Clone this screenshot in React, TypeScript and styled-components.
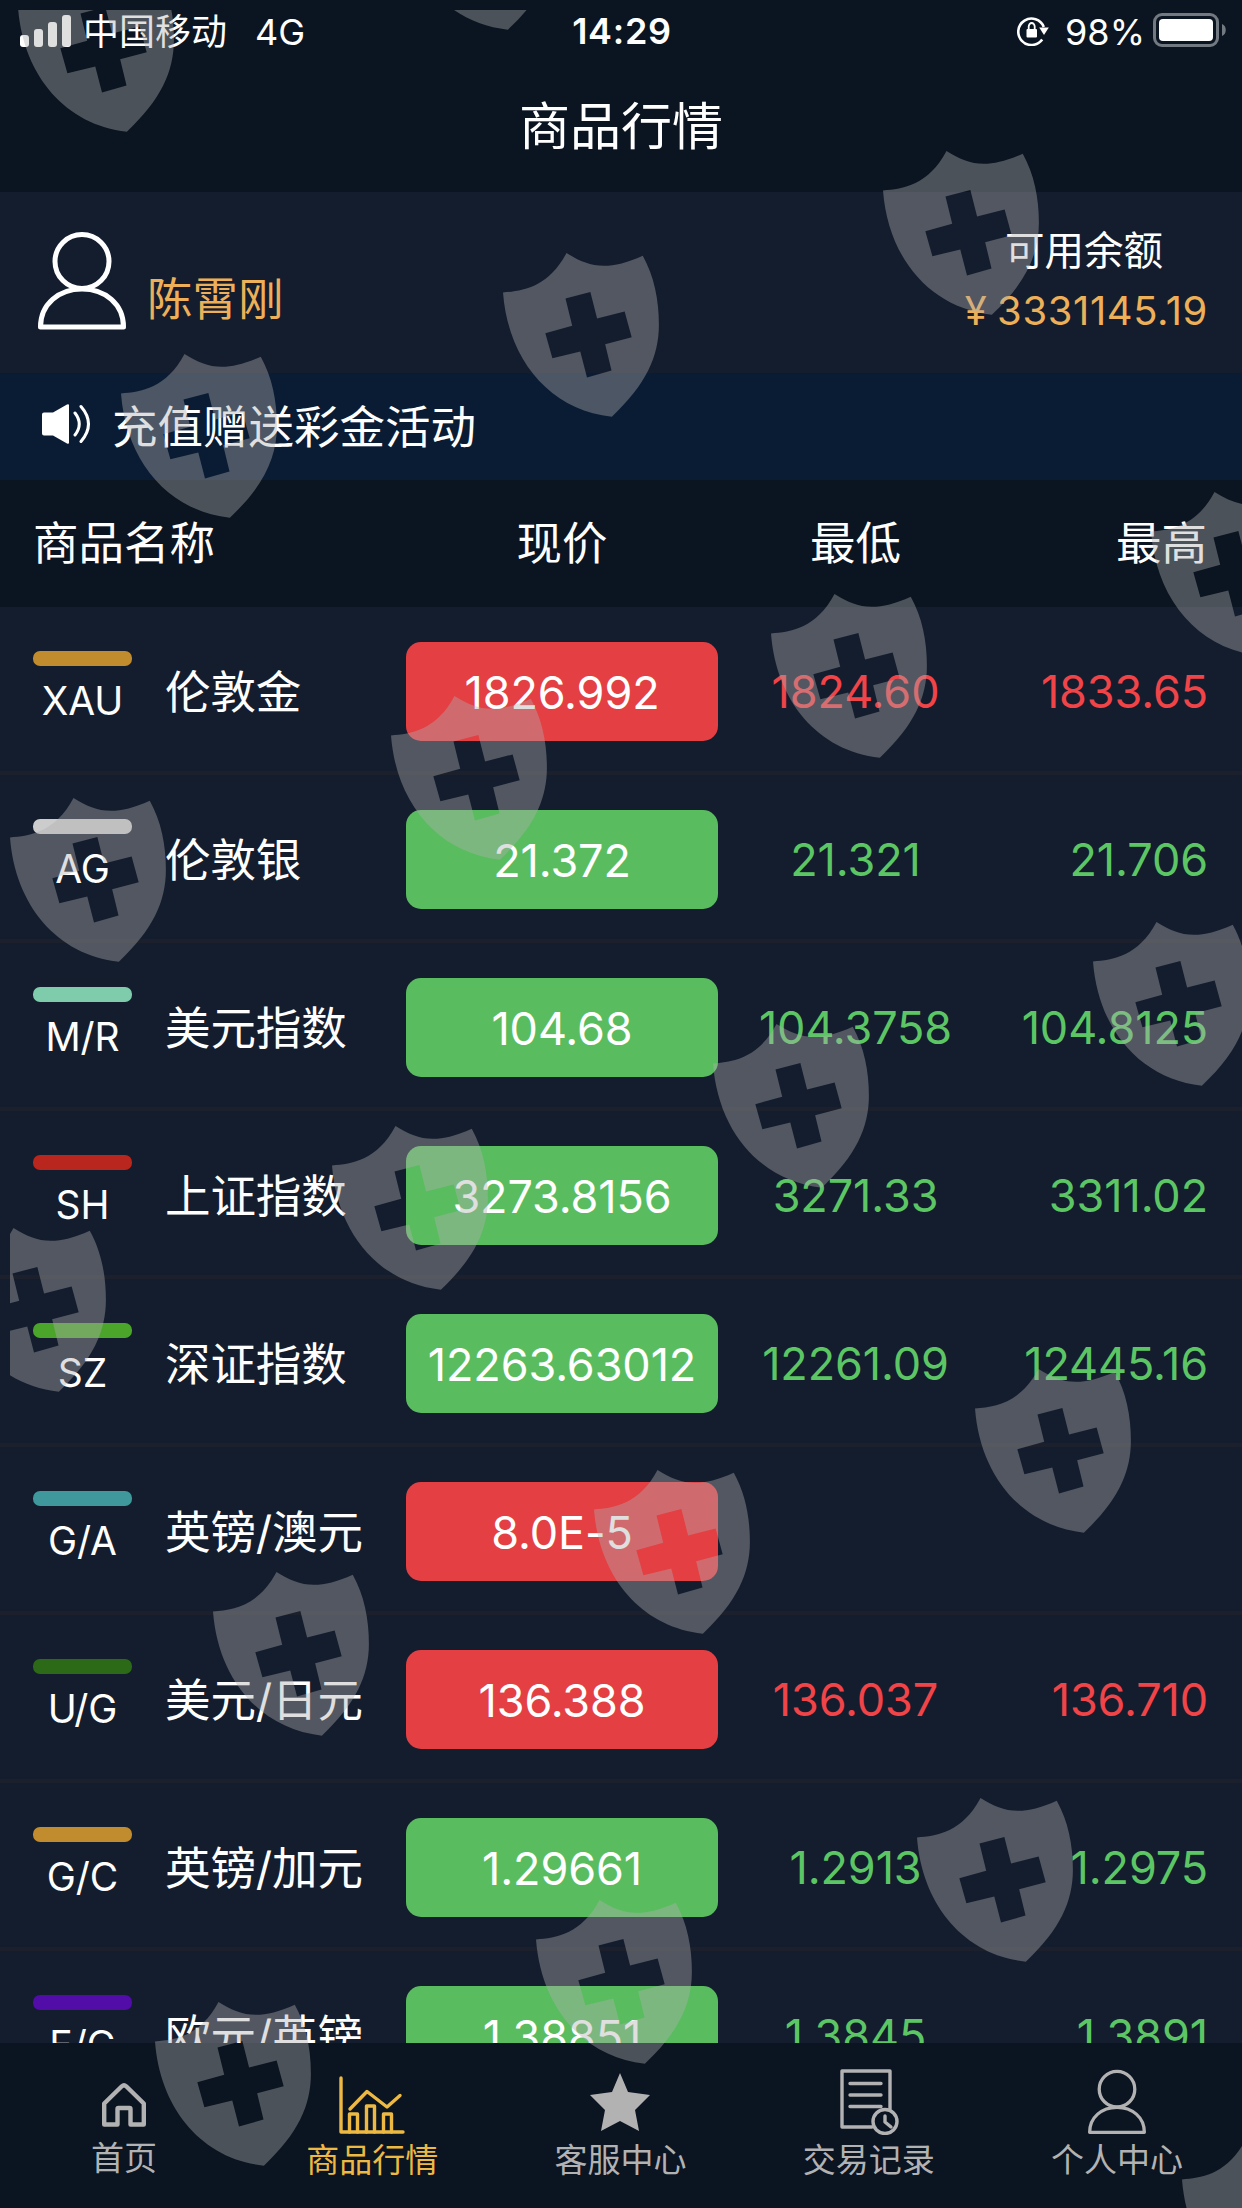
import styled, { createGlobalStyle } from 'styled-components'

const GlobalStyle = createGlobalStyle`
  * {
    box-sizing: border-box;
  }
  body {
    margin: 0;
    background-color: #0b1421;
    color: #fff;
    font-family: Inter, 'Noto Sans CJK SC', sans-serif;
    font-weight: 380;
  }
`

const gold = '#edb059'
const red = '#f04448'
const green = '#5cc665'

// Page
const Screen = styled.div`
  position: relative;
  display: flex;
  flex-direction: column;
  width: 1242px;
  height: 2208px;
  overflow: hidden;
`

// Status bar
const StatusBar = styled.div`
  display: grid;
  grid-template-columns: 1fr auto 1fr;
  align-items: center;
  height: 62px;
  padding: 0 15px 0 20px;
`
const StatusSide = styled.div<{ $end?: boolean }>`
  display: flex;
  align-items: center;
  justify-content: ${(p) => (p.$end ? 'flex-end' : 'flex-start')};
`
const Signal = styled.div`
  display: flex;
  align-items: flex-end;
  gap: 5px;
  height: 32px;
  margin-right: 12px;
`
const SignalBar = styled.span<{ $height: number }>`
  width: 9px;
  height: ${(p) => p.$height}px;
  border-radius: 3px;
  background-color: #fff;
`
const StatusText = styled.span<{ $left?: number }>`
  margin-left: ${(p) => p.$left ?? 0}px;
  padding-top: 1px;
  font-size: 36px;
  line-height: 1;
`
const Battery = styled.span`
  margin-left: 8px;
  padding-top: 1px;
`
const Clock = styled.span`
  margin-right: 3px;
  font-size: 36px;
  font-weight: 600;
  letter-spacing: 0.7px;
`

// Title
const TitleBar = styled.h1`
  display: flex;
  align-items: center;
  justify-content: center;
  height: 130px;
  margin: 0;
  padding-bottom: 9px;
  font-size: 51px;
  font-weight: inherit;
`

// User panel
const UserPanel = styled.div`
  display: flex;
  align-items: center;
  justify-content: space-between;
  height: 181px;
  padding: 0 34px 3px 38px;
  background-color: #141d2e;
`
const UserInfo = styled.div`
  display: flex;
  align-items: flex-end;
  gap: 21px;
`
const UserName = styled.span`
  color: ${gold};
  font-size: 45.5px;
  line-height: 61px;
`
const Balance = styled.div`
  display: flex;
  flex-direction: column;
  align-items: flex-end;
`
const BalanceLabel = styled.span`
  margin-right: 45px;
  font-size: 39.5px;
  line-height: 60px;
`
const BalanceValue = styled.span`
  color: ${gold};
  font-size: 40px;
  letter-spacing: 0.6px;
  word-spacing: -2px;
  line-height: 60px;
`

// Notice
const Notice = styled.div`
  display: flex;
  align-items: center;
  gap: 20px;
  height: 107px;
  padding: 0 0 6px 41px;
  background-color: #0a1c34;
  font-size: 45.5px;
`

// Table
const TableHead = styled.div`
  display: grid;
  grid-template-columns: 373px 312px 275px 1fr;
  align-items: center;
  flex-shrink: 0;
  height: 127px;
  padding: 0 35px 7px 33px;
  font-size: 45.5px;
`
const HeadCell = styled.span<{ $align?: string }>`
  text-align: ${(p) => p.$align ?? 'left'};
`
const List = styled.div`
  flex: 1;
  min-height: 0;
  overflow: hidden;
`
const Row = styled.div`
  display: grid;
  grid-template-columns: 373px 312px 275px 1fr;
  align-items: center;
  height: 168px;
  padding: 5px 34px 0 33px;
  background-color: #141d2e;
  border-bottom: 4px solid #1b202c;
  font-size: 45px;
  letter-spacing: -0.1px;
`
const Product = styled.div`
  display: flex;
  align-items: center;
  gap: 33px;
  padding-bottom: 7px;
  font-size: 45.5px;
  letter-spacing: -0.1px;
`
const Name = styled.span`
  padding-top: 2px;
`
const Code = styled.div`
  display: flex;
  flex-direction: column;
  align-items: center;
  gap: 11px;
  width: 99px;
  font-size: 39px;
  line-height: 48px;
`
const Stripe = styled.span<{ $color: string }>`
  width: 99px;
  height: 15px;
  border-radius: 7px;
  background-color: ${(p) => p.$color};
`
const Price = styled.div<{ $up: boolean }>`
  display: flex;
  align-items: center;
  justify-content: center;
  height: 99px;
  padding-top: 1px;
  border-radius: 15px;
  background-color: ${(p) => (p.$up ? '#e43f43' : '#59bd5f')};
`
const Figure = styled.span<{ $up: boolean; $align: string }>`
  color: ${(p) => (p.$up ? red : green)};
  text-align: ${(p) => p.$align};
`

// Tab bar
const TabBar = styled.nav`
  display: grid;
  grid-template-columns: repeat(5, 1fr);
  flex-shrink: 0;
  height: 165px;
  padding-right: 1px;
  background-color: #0b1421;
`
const Tab = styled.div<{ $active?: boolean; $lift?: number; $gap?: number }>`
  display: flex;
  flex-direction: column;
  align-items: center;
  justify-content: flex-end;
  padding-bottom: ${(p) => 24 + (p.$lift ?? 0)}px;
  color: ${(p) => (p.$active ? '#edb942' : '#b2b2b3')};
  font-size: 33px;
  line-height: 48px;
  svg {
    display: block;
    margin-bottom: ${(p) => p.$gap ?? 2}px;
  }
`

// Shields scattered over the whole page
const Overlay = styled.svg`
  position: absolute;
  top: 10px;
  left: 10px;
  pointer-events: none;
`

const shields = [
  [18, -32],
  [399, -134],
  [883, 151],
  [503, 253],
  [121, 354],
  [1151, 492],
  [771, 594],
  [391, 696],
  [10, 798],
  [1093, 922],
  [713, 1024],
  [332, 1126],
  [-50, 1228],
  [975, 1369],
  [594, 1470],
  [213, 1572],
  [917, 1798],
  [536, 1900],
  [155, 2002],
  [1182, 2140],
]

const products = [
  { code: 'XAU', name: '伦敦金', color: '#c08c2e', price: '1826.992', low: '1824.60', high: '1833.65', up: true },
  { code: 'AG', name: '伦敦银', color: '#cccccc', price: '21.372', low: '21.321', high: '21.706', up: false },
  { code: 'M/R', name: '美元指数', color: '#7fccad', price: '104.68', low: '104.3758', high: '104.8125', up: false },
  { code: 'SH', name: '上证指数', color: '#b9261d', price: '3273.8156', low: '3271.33', high: '3311.02', up: false },
  { code: 'SZ', name: '深证指数', color: '#4ba52b', price: '12263.63012', low: '12261.09', high: '12445.16', up: false },
  { code: 'G/A', name: '英镑/澳元', color: '#3f989c', price: '8.0E-5', low: '', high: '', up: true },
  { code: 'U/G', name: '美元/日元', color: '#2c6a18', price: '136.388', low: '136.037', high: '136.710', up: true },
  { code: 'G/C', name: '英镑/加元', color: '#c08c2e', price: '1.29661', low: '1.2913', high: '1.2975', up: false },
  { code: 'E/G', name: '欧元/英镑', color: '#520ca8', price: '1.38851', low: '1.3845', high: '1.3891', up: false },
]

function PersonIcon({ width, height, stroke }: { width: number; height: number; stroke: number }) {
  return (
    <svg
      width={width}
      height={height}
      viewBox="0 0 88 98"
      fill="none"
      stroke="currentColor"
      strokeWidth={stroke}
      strokeLinejoin="round"
    >
      <circle cx="44" cy="29.5" r="27" />
      <path d="M2.5 95C2.5 72 21 57 44 57S85.5 72 85.5 95Z" />
    </svg>
  )
}

function RotationLockIcon() {
  return (
    <svg width="32" height="30" viewBox="0 0 32 30" fill="none">
      <path d="M25.2 23.5A13.2 13.2 0 1 1 26.8 11" stroke="#fff" strokeWidth="2.6" />
      <path d="M22.2 11.5h9.6l-4.8 7.5z" fill="#fff" />
      <rect x="9.500" y="13" width="10.500" height="8.500" rx="1" fill="#fff" />
      <path d="M11.700 13.500v-3a3 3.500 0 0 1 6 0v3" stroke="#fff" strokeWidth="1.8" />
    </svg>
  )
}

function BatteryIcon() {
  return (
    <svg width="74" height="34" viewBox="0 0 74 34" fill="none">
      <rect x="1.5" y="1.5" width="63" height="31" rx="7.5" stroke="#737980" strokeWidth="3" />
      <rect x="6" y="6" width="54" height="22" rx="4" fill="#fff" />
      <path d="M69 11c5 1.5 5 10.500 0 12z" fill="#737980" />
    </svg>
  )
}

function SpeakerIcon() {
  return (
    <svg width="51" height="42" viewBox="0 0 51 42" fill="none">
      <path d="M3 9.5h9L26 1.5q2-1 2 1v37q0 2-2 1L12 32.500H3q-2 0-2-2v-19q0-2 2-2z" fill="#fff" />
      <path d="M34 10q8.5 11 0 22M40 3.500q15 17.500 0 35" stroke="#fff" strokeWidth="3" strokeLinecap="round" />
    </svg>
  )
}

function HomeIcon() {
  return (
    <svg width="46" height="46" viewBox="0 0 46 46" fill="none" stroke="currentColor" strokeWidth="4.4" strokeLinejoin="round">
      <path d="M3.2 21.500 20.8 4.300q2.200-2 4.400 0L42.800 21.500V42.500H29.500V27q0-1-1-1h-11q-1 0-1 1v15.500H3.200Z" />
    </svg>
  )
}

function ChartIcon() {
  return (
    <svg width="66" height="58" viewBox="0 0 66 58" fill="none" stroke="currentColor" strokeWidth="3.4" strokeLinecap="round" strokeLinejoin="round">
      <path d="M2 2V56H64" />
      <path d="M11 33 28 15.500 48 31 61 19.500" />
      <path d="M10.500 56V38h8V56M27.500 56V30h8V56M44.500 56V38h8V56" />
    </svg>
  )
}

function StarIcon() {
  return (
    <svg width="62" height="59" viewBox="0 0 62 59" fill="currentColor">
      <path d="M31 0 39 19 61 22 46 37 50 58 31 48 12 58 16 37 1 22 23 19Z" />
    </svg>
  )
}

function RecordIcon() {
  return (
    <svg width="60" height="66" viewBox="0 0 60 66" fill="none" stroke="currentColor" strokeWidth="3.4" strokeLinecap="round" strokeLinejoin="round">
      <path d="M33 58H3V2H51V40" />
      <path d="M11 14.500H42M11 26H42M11 37.500H42" />
      <circle cx="46" cy="52.5" r="12" />
      <path d="M46 47v6l6 5" />
    </svg>
  )
}

function Shields() {
  return (
    <Overlay width="1232" height="2198" viewBox="10 10 1232 2198">
      {shields.map(([x, y]) => (
        <path
          key={`${x},${y}`}
          transform={`translate(${x} ${y}) scale(.336 .334)`}
          fill="#afafaf"
          fillOpacity=".4"
          fillRule="evenodd"
          d="M0 118C60 114 135 102 189 0C255 42 310 56 416 8C450 70 464 140 464 215C464 310 425 395 324 490C140 470 15 320 0 118ZM186 136 206 218 126 240 147 315 230 295 250 373 323 352 304 273 383 252 362 175 280 196 260 117Z"
        />
      ))}
    </Overlay>
  )
}

export default function App() {
  return (
    <Screen>
      <GlobalStyle />
      <StatusBar>
        <StatusSide>
          <Signal>
            {[12, 18, 25, 32].map((height) => (
              <SignalBar key={height} $height={height} />
            ))}
          </Signal>
          <StatusText>中国移动</StatusText>
          <StatusText $left={28}>4G</StatusText>
        </StatusSide>
        <Clock>14:29</Clock>
        <StatusSide $end>
          <RotationLockIcon />
          <StatusText $left={16}>98%</StatusText>
          <Battery>
            <BatteryIcon />
          </Battery>
        </StatusSide>
      </StatusBar>
      <TitleBar>商品行情</TitleBar>

      <UserPanel>
        <UserInfo>
          <PersonIcon width={88} height={98} stroke={5} />
          <UserName>陈霄刚</UserName>
        </UserInfo>
        <Balance>
          <BalanceLabel>可用余额</BalanceLabel>
          <BalanceValue>¥ 3331145.19</BalanceValue>
        </Balance>
      </UserPanel>

      <Notice>
        <SpeakerIcon />
        充值赠送彩金活动
      </Notice>

      <TableHead>
        <HeadCell>商品名称</HeadCell>
        <HeadCell $align="center">现价</HeadCell>
        <HeadCell $align="center">最低</HeadCell>
        <HeadCell $align="right">最高</HeadCell>
      </TableHead>
      <List>
        {products.map((item) => (
          <Row key={item.code}>
            <Product>
              <Code>
                <Stripe $color={item.color} />
                {item.code}
              </Code>
              <Name>{item.name}</Name>
            </Product>
            <Price $up={item.up}>{item.price}</Price>
            <Figure $up={item.up} $align="center">
              {item.low}
            </Figure>
            <Figure $up={item.up} $align="right">
              {item.high}
            </Figure>
          </Row>
        ))}
      </List>

      <TabBar>
        <Tab $lift={2} $gap={6}>
          <HomeIcon />
          首页
        </Tab>
        <Tab $active>
          <ChartIcon />
          商品行情
        </Tab>
        <Tab $gap={4}>
          <StarIcon />
          客服中心
        </Tab>
        <Tab $gap={1}>
          <RecordIcon />
          交易记录
        </Tab>
        <Tab $gap={1}>
          <PersonIcon width={58} height={66} stroke={5} />
          个人中心
        </Tab>
      </TabBar>
      <Shields />
    </Screen>
  )
}
